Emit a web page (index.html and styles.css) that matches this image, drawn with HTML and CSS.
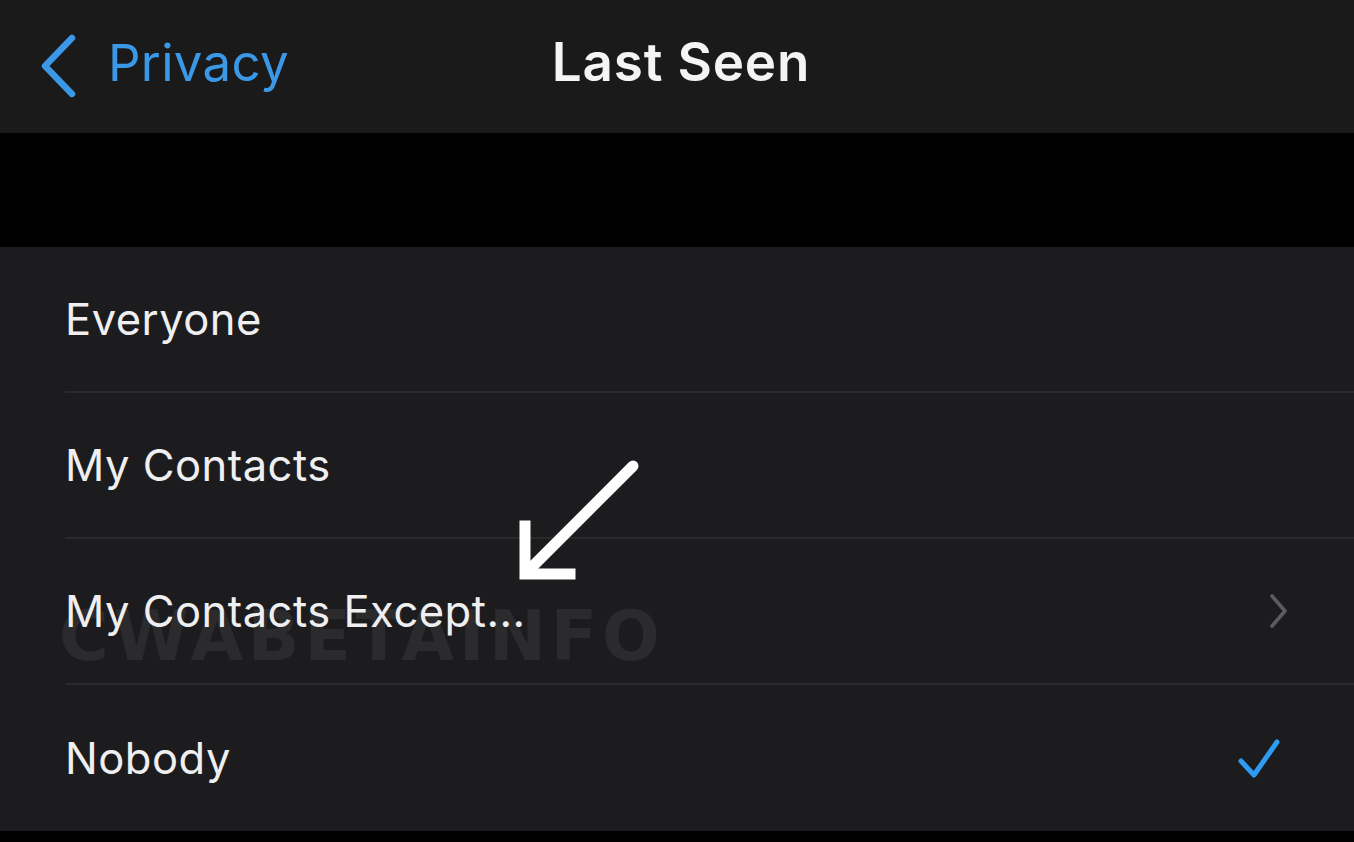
FILE: index.html
```html
<!DOCTYPE html>
<html lang="en">
<head>
<meta charset="utf-8">
<title>Last Seen</title>
<link rel="stylesheet" href="styles.css">
</head>
<body>
<div class="screen">
  <header class="nav">
    <a class="back" href="#">
      <svg class="back-icon" viewBox="0 0 40 64" width="40" height="64" aria-hidden="true">
        <path d="M34 4 L7 32 L34 60" fill="none" stroke="#3b98e6" stroke-width="6.5" stroke-linecap="round" stroke-linejoin="round"/>
      </svg>
      <span class="back-label">Privacy</span>
    </a>
    <h1 class="title">Last Seen</h1>
    <div class="nav-right"></div>
  </header>

  <div class="gap"></div>

  <ul class="list">
    <li class="row"><div class="row-inner"><span class="label">Everyone</span></div></li>
    <li class="row"><div class="row-inner"><span class="label">My Contacts</span></div></li>
    <li class="row row-except">
      <div class="row-inner">
        <span class="watermark" aria-hidden="true">CWABETAINFO</span>
        <span class="label">My Contacts Except...</span>
        <span class="accessory">
          <svg viewBox="0 0 24 36" width="24" height="36" aria-hidden="true">
            <path d="M6 3 L19 18 L6 33" fill="none" stroke="#5b5b60" stroke-width="3.6" stroke-linecap="round" stroke-linejoin="round"/>
          </svg>
        </span>
      </div>
    </li>
    <li class="row row-last">
      <div class="row-inner">
        <span class="label">Nobody</span>
        <span class="accessory accessory-check">
          <svg viewBox="0 0 48 48" width="48" height="48" aria-hidden="true">
            <path d="M6 27 L19 41 L42 8" fill="none" stroke="#2e9cf2" stroke-width="5" stroke-linecap="round" stroke-linejoin="round"/>
          </svg>
        </span>
      </div>
    </li>
  </ul>

  <svg class="pointer" viewBox="0 0 140 130" width="140" height="130" aria-hidden="true">
    <path d="M121 10 L18 113" fill="none" stroke="#ffffff" stroke-width="11" stroke-linecap="round"/>
    <path d="M13 70 L13 118 L58 118" fill="none" stroke="#ffffff" stroke-width="11" stroke-linecap="square" stroke-linejoin="miter"/>
  </svg>
</div>
</body>
</html>
```

FILE: styles.css
```css
* {
  box-sizing: border-box;
}

html, body {
  margin: 0;
  padding: 0;
  background: #000;
}

body {
  font-family: Inter, "Liberation Sans", Arial, sans-serif;
  color: #f1f1f3;
}

.screen {
  position: relative;
  width: 1354px;
  height: 842px;
  overflow: hidden;
  background: #000;
}

.nav {
  height: 133px;
  background: #1a1a1b;
  display: grid;
  grid-template-columns: 1fr auto 1fr;
  align-items: center;
}

.back {
  display: flex;
  align-items: center;
  gap: 30px;
  padding-left: 38px;
  text-decoration: none;
  color: #3b98e6;
  margin-top: -8px;
}

.back-icon {
  display: block;
  margin-top: 6px;
}

.back-label {
  font-size: 51px;
  font-weight: 400;
  letter-spacing: 0.3px;
}

.title {
  margin: 0;
  font-size: 53px;
  font-weight: 600;
  color: #f4f4f6;
  letter-spacing: 0.8px;
  margin-top: -10px;
  margin-left: 8px;
}

.gap {
  height: 114px;
  background: #000;
}

.list {
  list-style: none;
  margin: 0;
  padding: 0;
  background: #1c1c1f;
}

.row {
  height: 146px;
  padding-left: 65px;
}

.row-inner {
  position: relative;
  height: 100%;
  display: flex;
  align-items: center;
  justify-content: space-between;
  padding-right: 64px;
  border-bottom: 2px solid #2a2a2d;
}

.row-last .row-inner {
  border-bottom: none;
}

.label {
  position: relative;
  z-index: 1;
  font-size: 43.5px;
  font-weight: 400;
  letter-spacing: 0.5px;
  color: #efeff1;
}

.accessory {
  position: relative;
  z-index: 1;
  display: flex;
  align-items: center;
  justify-content: flex-end;
  width: 50px;
}

.accessory-check {
  margin-right: 7px;
}

.watermark {
  position: absolute;
  left: -6px;
  top: 56px;
  font-family: "DejaVu Sans", sans-serif;
  font-weight: 700;
  font-size: 70px;
  letter-spacing: 5px;
  transform: scaleX(0.97);
  transform-origin: left top;
  color: #2b2b2e;
  z-index: 0;
  white-space: nowrap;
}

.pointer {
  position: absolute;
  left: 512px;
  top: 456px;
}
```
